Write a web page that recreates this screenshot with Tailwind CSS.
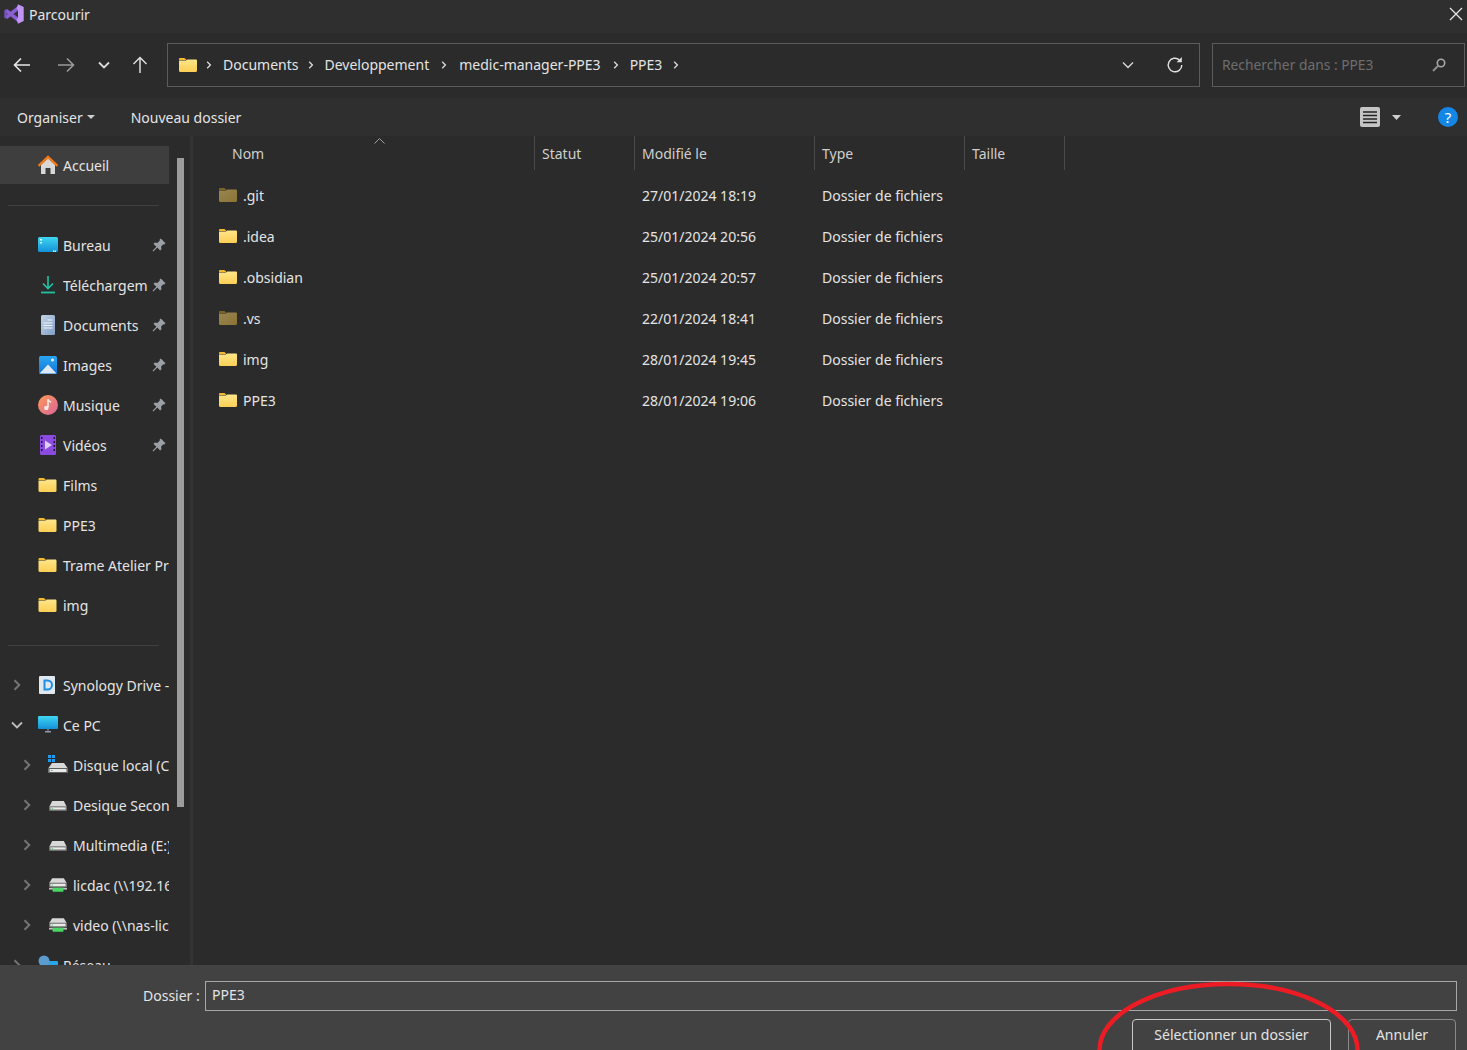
<!DOCTYPE html>
<html lang="fr">
  <head>
    <meta charset="UTF-8" />
    <meta name="viewport" content="width=device-width, initial-scale=1.0" />
    <title>Parcourir</title>
    <script src="https://cdn.jsdelivr.net/npm/@tailwindcss/browser@4"></script>
  </head>
  <body class="bg-[#2b2b2b] select-none">
    <!-- shared icons -->
    <svg class="absolute w-0 h-0" aria-hidden="true">
      <defs>
        <linearGradient id="g-folder" x1="0" y1="0" x2="0" y2="1"><stop offset="0" stop-color="#ffe58a" /><stop offset="1" stop-color="#fbcf55" /></linearGradient>
        <linearGradient id="g-dim" x1="0" y1="0" x2="1" y2="1"><stop offset="0" stop-color="#9a8652" /><stop offset="1" stop-color="#8a7334" /></linearGradient>
        <linearGradient id="g-desk" x1="0" y1="0" x2="0" y2="1"><stop offset="0" stop-color="#3fd6f2" /><stop offset="1" stop-color="#1492d8" /></linearGradient>
        <linearGradient id="g-doc" x1="0" y1="0" x2="1" y2="1"><stop offset="0" stop-color="#c3d4e8" /><stop offset="1" stop-color="#7f9fc4" /></linearGradient>
        <linearGradient id="g-music" x1="0" y1="0" x2="1" y2="1"><stop offset="0" stop-color="#ff9a52" /><stop offset="1" stop-color="#d9649e" /></linearGradient>
        <linearGradient id="g-img" x1="0" y1="0" x2="0" y2="1"><stop offset="0" stop-color="#2aa6f2" /><stop offset="1" stop-color="#0f74d6" /></linearGradient>
        <symbol id="folder" viewBox="0 0 18 14"><path d="M0 1.200C0 .5.5 0 1.200 0h4.300L7.500 2H0z" fill="#f4b92c" /><path d="M0 2.600h6.800L8.300 1.400h8.500c.7 0 1.200.5 1.200 1.200v10.200c0 .7-.5 1.200-1.200 1.200H1.200C.5 14 0 13.500 0 12.800z" fill="url(#g-folder)" /></symbol>
        <symbol id="folder-dim" viewBox="0 0 18 14"><path d="M0 1.200C0 .5.5 0 1.200 0h4.300L7.500 2H0z" fill="#7d6420" /><path d="M0 2.600h6.800L8.300 1.400h8.500c.7 0 1.200.5 1.200 1.200v10.200c0 .7-.5 1.200-1.200 1.200H1.200C.5 14 0 13.500 0 12.800z" fill="url(#g-dim)" /></symbol>
        <symbol id="pin" viewBox="0 0 14 14"><path d="M8.800 .5l4.700 4.700-1.200 1.200-.9-.2-2.300 2.400.3 2.600-1.300 1.300-2.800-2.900L1.300 13.500.5 12.700l3.900-4L1.500 5.900l1.300-1.300 2.600.3 2.400-2.300-.2-.9z" fill="#9aa0a6" /></symbol>
        <symbol id="chev" viewBox="0 0 8 12"><path d="M1.500 1.200L6.300 6l-4.800 4.800" fill="none" stroke="#747474" stroke-width="2" /></symbol>
        <symbol id="crumb" viewBox="0 0 6 8"><path d="M1.200 .8L4.400 4 1.200 7.200" fill="none" stroke="#dcdcdc" stroke-width="1.300" /></symbol>
        <symbol id="drive" viewBox="0 0 20 12"><path d="M3.500 1h13l3 6v4.500H.500V7z" fill="#d8d8d8" /><path d="M.5 7h19v4.500H.5z" fill="#5d5d5d" /><path d="M1.500 8h17v2.500h-17z" fill="#e9e9e9" /><path d="M3 9h1.500v1H3z" fill="#3ccf4e" /></symbol>
        <symbol id="netdrive" viewBox="0 0 20 15"><path d="M3.500 0h13l3 5v5H.500V5z" fill="#d8d8d8" /><path d="M.5 5h19v5H.5z" fill="#5d5d5d" /><path d="M1.500 6h17v3h-17z" fill="#e9e9e9" /><path d="M3 7h1.500v1H3z" fill="#3ccf4e" /><path d="M0 11h20v1.500H0z" fill="#d8d8d8" /><path d="M4 10.500h12V15H4z" fill="#4bd765" /></symbol>
      </defs>
    </svg>

    <div class="relative w-[1467px] h-[1050px] overflow-hidden flex flex-col text-[14px] text-[#e4e4e4] font-['Noto_Sans','Open_Sans',sans-serif]">
      <!-- title bar -->
      <header class="h-[33px] bg-[#2f2f2f] flex items-center pl-1 pr-[4px] pb-[5px]">
        <svg class="w-5 h-5" viewBox="0 0 20 20"><path d="M2 6.500L15 16.500M2 13.500L15 3.500" stroke="#8a5fd6" stroke-width="3.600" /><path d="M.3 6.300L2.500 5v10L.3 13.700z" fill="#7a52bf" /><path d="M14 .3l5.700 2.700v14L14 19.700l-1.500-4.500L14 14V6l-1.500-1.200z" fill="#bf94f2" /></svg>
        <span class="ml-[5px]">Parcourir</span>
        <svg class="ml-auto w-[14px] h-[14px]" viewBox="0 0 14 14"><path d="M1 1l12 12M13 1L1 13" stroke="#e6e6e6" stroke-width="1.300" /></svg>
      </header>

      <!-- address row -->
      <div class="h-[65px] bg-[#2b2b2b] flex items-start pt-[10px]">
        <div class="w-[167px] h-[44px] flex items-center">
          <div class="w-11 flex justify-center">
            <svg class="w-[18px] h-4" viewBox="0 0 18 16"><path d="M17 8H1.500M8 1.500L1.500 8 8 14.500" fill="none" stroke="#e8e8e8" stroke-width="1.600" /></svg>
          </div>
          <div class="w-11 flex justify-center">
            <svg class="w-[18px] h-4" viewBox="0 0 18 16"><path d="M1 8h15.500M10 1.500L16.500 8 10 14.500" fill="none" stroke="#9a9a9a" stroke-width="1.600" /></svg>
          </div>
          <div class="w-8 flex justify-center">
            <svg class="w-3 h-2" viewBox="0 0 12 8"><path d="M1 1.500l5 5 5-5" fill="none" stroke="#dcdcdc" stroke-width="1.800" /></svg>
          </div>
          <div class="w-10 flex justify-center">
            <svg class="w-4 h-[18px]" viewBox="0 0 16 18"><path d="M8 17V1.500M1.500 8L8 1.500 14.500 8" fill="none" stroke="#dcdcdc" stroke-width="1.500" /></svg>
          </div>
        </div>
        <div class="w-[1033px] h-[44px] border border-[#5c5c5c] flex items-center pl-[11px] pr-[15px] pb-px">
          <svg class="w-[18px] h-[14px]"><use href="#folder" /></svg>
          <svg class="ml-[9px] mr-[11px] w-[6px] h-2"><use href="#crumb" /></svg>
          <span>Documents</span>
          <svg class="mx-[10px] w-[6px] h-2"><use href="#crumb" /></svg>
          <span>Developpement</span>
          <svg class="mx-3 w-[6px] h-2"><use href="#crumb" /></svg>
          <span>medic-manager-PPE3</span>
          <svg class="ml-3 mr-[11px] w-[6px] h-2"><use href="#crumb" /></svg>
          <span>PPE3</span>
          <svg class="mx-[11px] w-[6px] h-2"><use href="#crumb" /></svg>
          <svg class="ml-auto w-3 h-2" viewBox="0 0 12 8"><path d="M1 1.500l5 5 5-5" fill="none" stroke="#dcdcdc" stroke-width="1.300" /></svg>
          <svg class="ml-[32px] w-[18px] h-[18px]" viewBox="0 0 18 18"><path d="M15.800 9A6.800 6.800 0 1 1 13.500 3.900" fill="none" stroke="#e0e0e0" stroke-width="1.400" /><path d="M15.800 1v5.200h-5.200z" fill="#e0e0e0" /></svg>
        </div>
        <div class="ml-3 w-[253px] h-[44px] border border-[#5c5c5c] flex items-center pl-[9px] pr-[18px] text-[#6e6e6e]">
          <span class="text-[13.800px] pt-px">Rechercher dans : PPE3</span>
          <svg class="ml-auto w-[14px] h-[14px]" viewBox="0 0 14 14"><circle cx="9" cy="5" r="3.700" fill="none" stroke="#a8a8a8" stroke-width="1.600" /><path d="M6.200 7.800L1 13" stroke="#8c8c8c" stroke-width="2" /></svg>
        </div>
      </div>

      <!-- toolbar -->
      <div class="h-[38px] bg-[#2f2f2f] flex items-center pl-[17px] pr-[9px]">
        <span>Organiser</span>
        <svg class="ml-1 w-2 h-1" viewBox="0 0 8 4"><path d="M0 0h8L4 4z" fill="#cfcfcf" /></svg>
        <span class="ml-9">Nouveau dossier</span>
        <svg class="ml-auto w-5 h-5" viewBox="0 0 20 20"><rect width="20" height="20" rx="2" fill="#c4c4c4" /><path d="M3 5h14M3 8.500h14M3 12h14M3 15.500h14" stroke="#222" stroke-width="1.300" /></svg>
        <svg class="ml-3 w-[9px] h-[5px]" viewBox="0 0 9 5"><path d="M0 0h9L4.500 5z" fill="#cfcfcf" /></svg>
        <div class="ml-[37px] w-5 h-5 rounded-full bg-[#1487e6] flex items-center justify-center text-white text-[15px] leading-none">?</div>
      </div>

      <!-- main -->
      <div class="h-[829px] flex overflow-hidden">
        <aside class="w-[193px] shrink-0 flex border-r-[3px] border-[#333333]">
          <nav class="w-[169px] shrink-0 pt-[10px]">
            <div class="h-[38px] bg-[#3e3e3e] flex items-center pl-[38px]">
              <svg class="w-5 h-5" viewBox="0 0 20 20"><path d="M3 9.500L10 3l7 6.500V19h-4.500v-6h-5v6H3z" fill="#d8d8d8" /><path d="M.5 10.800L10 2l9.500 8.800" fill="none" stroke="#f07a1a" stroke-width="2.400" /></svg>
              <span class="ml-[5px]">Accueil</span>
            </div>
            <div class="h-[41px] pt-px flex items-center pl-2 pr-[10px]"><div class="h-px w-full bg-[#3f3f3f]"></div></div>

            <div class="h-10 flex items-center pl-[38px]">
              <svg class="w-5 h-5" viewBox="0 0 20 20"><rect y="2" width="20" height="15" rx="1.500" fill="url(#g-desk)" /><path d="M2 4h2v1.500H2zM2 7h2v1.500H2zM15 15.500h1.500V17H15zM17 15.500h1V17h-1z" fill="#e8f8ff" /></svg>
              <span class="ml-[5px] w-[85px] overflow-hidden whitespace-nowrap">Bureau</span>
              <svg class="ml-1 w-[14px] h-[14px]"><use href="#pin" /></svg>
            </div>
            <div class="h-10 flex items-center pl-[38px]">
              <svg class="w-5 h-5" viewBox="0 0 20 20"><path d="M10 1v12M5 8.500l5 5 5-5" fill="none" stroke="#20c4a4" stroke-width="1.600" /><path d="M3 17.500h14" stroke="#20c4a4" stroke-width="1.800" /></svg>
              <span class="ml-[5px] w-[85px] overflow-hidden whitespace-nowrap">Téléchargements</span>
              <svg class="ml-1 w-[14px] h-[14px]"><use href="#pin" /></svg>
            </div>
            <div class="h-10 flex items-center pl-[38px]">
              <svg class="w-5 h-5" viewBox="0 0 20 20"><rect x="3" width="14" height="20" rx="1.500" fill="url(#g-doc)" /><path d="M9.500 5h5M5.500 8h9M5.500 10.500h9M5.500 13h9" stroke="#f0f4fa" stroke-width="1" /></svg>
              <span class="ml-[5px] w-[85px] overflow-hidden whitespace-nowrap">Documents</span>
              <svg class="ml-1 w-[14px] h-[14px]"><use href="#pin" /></svg>
            </div>
            <div class="h-10 flex items-center pl-[38px]">
              <svg class="w-5 h-5" viewBox="0 0 20 20"><rect x="1" y="1" width="18" height="18" rx="1.500" fill="url(#g-img)" /><path d="M1.500 18.500L10 9.500l8.500 9z" fill="#dfe9f3" /><circle cx="14.500" cy="5" r="1.500" fill="#e8f4ff" /></svg>
              <span class="ml-[5px] w-[85px] overflow-hidden whitespace-nowrap">Images</span>
              <svg class="ml-1 w-[14px] h-[14px]"><use href="#pin" /></svg>
            </div>
            <div class="h-10 flex items-center pl-[38px]">
              <svg class="w-5 h-5" viewBox="0 0 20 20"><circle cx="10" cy="10" r="10" fill="url(#g-music)" /><path d="M10 4.500v8" stroke="#f4e9e9" stroke-width="1.600" /><path d="M10 4.500c.5 1.800 2 2 3 2.800" fill="none" stroke="#f4e9e9" stroke-width="1.500" /><circle cx="8.300" cy="13" r="2.200" fill="#f4e9e9" /></svg>
              <span class="ml-[5px] w-[85px] overflow-hidden whitespace-nowrap">Musique</span>
              <svg class="ml-1 w-[14px] h-[14px]"><use href="#pin" /></svg>
            </div>
            <div class="h-10 flex items-center pl-[38px]">
              <svg class="w-5 h-5" viewBox="0 0 20 20"><rect x="2" width="16" height="20" rx="1.500" fill="#8c4be0" /><path d="M3 2h1.500v2H3zM3 6h1.500v2H3zM3 10h1.500v2H3zM3 14h1.500v2H3zM15.500 2H17v2h-1.500zM15.500 6H17v2h-1.500zM15.500 10H17v2h-1.500zM15.500 14H17v2h-1.500z" fill="#241338" /><path d="M7 5.500l7 4.500-7 4.500z" fill="#dcd0f2" /></svg>
              <span class="ml-[5px] w-[85px] overflow-hidden whitespace-nowrap">Vidéos</span>
              <svg class="ml-1 w-[14px] h-[14px]"><use href="#pin" /></svg>
            </div>
            <div class="h-10 flex items-center pl-[38px]">
              <svg class="w-[19px] h-[14px]"><use href="#folder" /></svg>
              <span class="ml-[6px] whitespace-nowrap">Films</span>
            </div>
            <div class="h-10 flex items-center pl-[38px]">
              <svg class="w-[19px] h-[14px]"><use href="#folder" /></svg>
              <span class="ml-[6px] whitespace-nowrap">PPE3</span>
            </div>
            <div class="h-10 flex items-center pl-[38px] overflow-hidden">
              <svg class="w-[19px] h-[14px] shrink-0"><use href="#folder" /></svg>
              <span class="ml-[6px] whitespace-nowrap">Trame Atelier Programmation</span>
            </div>
            <div class="h-10 flex items-center pl-[38px]">
              <svg class="w-[19px] h-[14px]"><use href="#folder" /></svg>
              <span class="ml-[6px] whitespace-nowrap">img</span>
            </div>
            <div class="h-10 flex items-center pl-2 pr-[10px]"><div class="h-px w-full bg-[#3f3f3f]"></div></div>

            <div class="h-10 flex items-center pl-[13px] overflow-hidden">
              <svg class="w-2 h-3 shrink-0"><use href="#chev" /></svg>
              <svg class="ml-[17px] w-[19px] h-5 shrink-0" viewBox="0 0 19 20"><rect x="1" y="1" width="16" height="18" rx="1" fill="#dfe7ef" /><path d="M6.500 5.500h3a4.500 4.500 0 0 1 0 9h-3z" fill="none" stroke="#1c8fe8" stroke-width="2" /></svg>
              <span class="ml-[6px] whitespace-nowrap">Synology Drive - licdac</span>
            </div>
            <div class="h-10 flex items-center pl-[11px]">
              <svg class="w-3 h-2" viewBox="0 0 12 8"><path d="M1 1.500l5 5 5-5" fill="none" stroke="#bdbdbd" stroke-width="1.800" /></svg>
              <svg class="ml-[15px] w-5 h-5" viewBox="0 0 20 20"><rect y="1" width="20" height="13" rx="1" fill="url(#g-desk)" /><path d="M7 16h6v1.500H7z" fill="#8a9aa5" /><path d="M9 14h2v2H9z" fill="#5d6a72" /></svg>
              <span class="ml-[5px] whitespace-nowrap">Ce PC</span>
            </div>
            <div class="h-10 flex items-center pl-[23px] overflow-hidden">
              <svg class="w-2 h-3 shrink-0"><use href="#chev" /></svg>
              <svg class="ml-[17px] w-[20px] h-5 shrink-0" viewBox="0 0 20 20"><path d="M0 0h3v3H0zM4 0h3v3H4zM0 4h3v3H0zM4 4h3v3H4z" fill="#1c9cf0" /><path d="M4 8h12l3.500 5v5H.500v-5z" fill="#d8d8d8" /><path d="M.5 13h19v5H.5z" fill="#5d5d5d" /><path d="M1.500 14h17v3h-17z" fill="#e9e9e9" /><path d="M3 15h1.500v1H3z" fill="#3ccf4e" /></svg>
              <span class="ml-[5px] whitespace-nowrap">Disque local (C:)</span>
            </div>
            <div class="h-10 flex items-center pl-[23px] overflow-hidden">
              <svg class="w-2 h-3 shrink-0"><use href="#chev" /></svg>
              <svg class="ml-[18px] w-[18px] h-[11px] shrink-0"><use href="#drive" /></svg>
              <span class="ml-[6px] whitespace-nowrap">Desique Secondaire</span>
            </div>
            <div class="h-10 flex items-center pl-[23px] overflow-hidden">
              <svg class="w-2 h-3 shrink-0"><use href="#chev" /></svg>
              <svg class="ml-[18px] w-[18px] h-[11px] shrink-0"><use href="#drive" /></svg>
              <span class="ml-[6px] whitespace-nowrap">Multimedia (E:)</span>
            </div>
            <div class="h-10 flex items-center pl-[23px] overflow-hidden">
              <svg class="w-2 h-3 shrink-0"><use href="#chev" /></svg>
              <svg class="ml-[18px] w-[18px] h-[14px] shrink-0"><use href="#netdrive" /></svg>
              <span class="ml-[6px] whitespace-nowrap">licdac (\\192.168.1.10)</span>
            </div>
            <div class="h-10 flex items-center pl-[23px] overflow-hidden">
              <svg class="w-2 h-3 shrink-0"><use href="#chev" /></svg>
              <svg class="ml-[18px] w-[18px] h-[14px] shrink-0"><use href="#netdrive" /></svg>
              <span class="ml-[6px] whitespace-nowrap">video (\\nas-licdac)</span>
            </div>
            <div class="h-10 flex items-center pl-[13px] overflow-hidden">
              <svg class="w-2 h-3 shrink-0"><use href="#chev" /></svg>
              <svg class="ml-[17px] w-5 h-5 shrink-0" viewBox="0 0 20 20"><rect x="6" y="6" width="14" height="10" rx="1" fill="#2aa6e8" /><circle cx="6" cy="6" r="5.500" fill="#5a9bd0" /></svg>
              <span class="ml-[5px] whitespace-nowrap">Réseau</span>
            </div>
          </nav>
          <div class="ml-2 w-[7px] shrink-0 pt-[22px]"><div class="h-[649px] bg-[#9c9c9c]"></div></div>
        </aside>

        <!-- file list -->
        <section class="flex-1 relative">
          <svg class="absolute left-[181px] top-[2px] w-[11px] h-[6px]" viewBox="0 0 11 6"><path d="M.5 5.500l5-5 5 5" fill="none" stroke="#a0a0a0" /></svg>
          <div class="grid grid-cols-[342px_100px_180px_150px_100px] h-[34px] text-[#cfcfcf]">
            <div class="pl-[39px] border-r border-[#4a4a4a] flex items-center">Nom</div>
            <div class="pl-[7px] border-r border-[#4a4a4a] flex items-center">Statut</div>
            <div class="pl-[7px] border-r border-[#4a4a4a] flex items-center">Modifié le</div>
            <div class="pl-[7px] border-r border-[#4a4a4a] flex items-center">Type</div>
            <div class="pl-[7px] border-r border-[#4a4a4a] flex items-center">Taille</div>
          </div>
          <div class="mt-[5px] grid grid-cols-[342px_100px_180px_150px] auto-rows-[41px] items-center">
            <div class="flex items-center pl-[26px]"><svg class="w-[18px] h-[14px] -mt-[2px]"><use href="#folder-dim" /></svg><span class="ml-[6px]">.git</span></div><div></div><div class="pl-[7px]">27/01/2024 18:19</div><div class="pl-[7px]">Dossier de fichiers</div>
            <div class="flex items-center pl-[26px]"><svg class="w-[18px] h-[14px] -mt-[2px]"><use href="#folder" /></svg><span class="ml-[6px]">.idea</span></div><div></div><div class="pl-[7px]">25/01/2024 20:56</div><div class="pl-[7px]">Dossier de fichiers</div>
            <div class="flex items-center pl-[26px]"><svg class="w-[18px] h-[14px] -mt-[2px]"><use href="#folder" /></svg><span class="ml-[6px]">.obsidian</span></div><div></div><div class="pl-[7px]">25/01/2024 20:57</div><div class="pl-[7px]">Dossier de fichiers</div>
            <div class="flex items-center pl-[26px]"><svg class="w-[18px] h-[14px] -mt-[2px]"><use href="#folder-dim" /></svg><span class="ml-[6px]">.vs</span></div><div></div><div class="pl-[7px]">22/01/2024 18:41</div><div class="pl-[7px]">Dossier de fichiers</div>
            <div class="flex items-center pl-[26px]"><svg class="w-[18px] h-[14px] -mt-[2px]"><use href="#folder" /></svg><span class="ml-[6px]">img</span></div><div></div><div class="pl-[7px]">28/01/2024 19:45</div><div class="pl-[7px]">Dossier de fichiers</div>
            <div class="flex items-center pl-[26px]"><svg class="w-[18px] h-[14px] -mt-[2px]"><use href="#folder" /></svg><span class="ml-[6px]">PPE3</span></div><div></div><div class="pl-[7px]">28/01/2024 19:06</div><div class="pl-[7px]">Dossier de fichiers</div>
          </div>
        </section>
      </div>

      <!-- footer -->
      <footer class="h-[85px] bg-[#424242] pt-4 pl-[143px] pr-[10px]">
        <div class="flex items-center">
          <span class="w-[57px] whitespace-nowrap pb-px">Dossier :</span>
          <div class="ml-[5px] flex-1 h-[30px] border border-[#a8a8a8] pl-[6px] flex items-center pb-[3px]">PPE3</div>
        </div>
        <div class="mt-2 flex justify-end pr-px">
          <button class="w-[199px] h-[38px] shrink-0 border border-[#c8c8c8] rounded pb-[8px]">Sélectionner un dossier</button>
          <button class="ml-[17px] w-[108px] h-[38px] shrink-0 border border-[#8a8a8a] rounded pb-[8px]">Annuler</button>
        </div>
      </footer>

      <!-- red annotation -->
      <svg class="absolute left-[1090px] top-[975px] w-[280px] h-[75px]" viewBox="0 0 280 75"><ellipse cx="138.500" cy="75" rx="129" ry="66" fill="none" stroke="#ed1c24" stroke-width="4.500" /></svg>
    </div>
  </body>
</html>
